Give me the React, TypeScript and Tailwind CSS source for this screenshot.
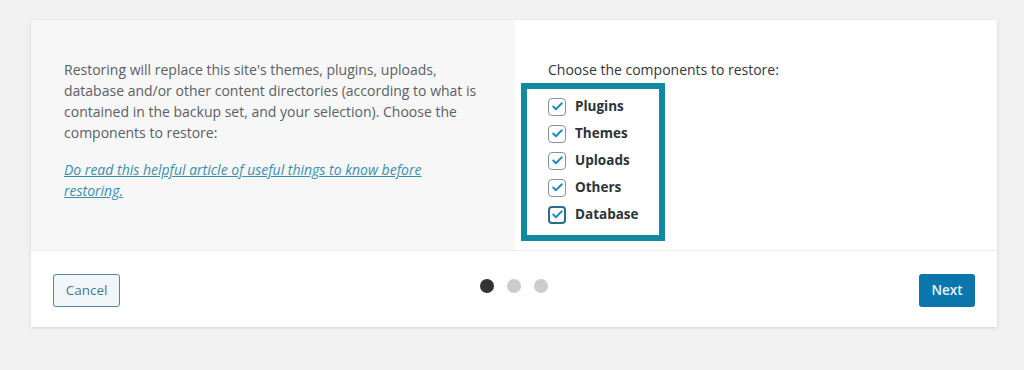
import { Check } from 'lucide-react'

const components = ['Plugins', 'Themes', 'Uploads', 'Others', 'Database']

export default function App() {
  return (
    <div className="h-[370px] overflow-hidden bg-[#f1f1f1] px-[31px] pt-[20px] font-['Open_Sans',sans-serif]">
      <div className="w-[966px] bg-white shadow-[0_1px_3px_rgba(0,0,0,0.13)]">
        <div className="flex h-[230px]">
          <div className="w-[484px] bg-[#f7f7f7] pl-[33px] pr-[20px] pt-[39px]">
            <p className="text-[14px] leading-[21px] text-[#5a6066]">
              Restoring will replace this site's themes, plugins, uploads,
              <br />
              database and/or other content directories (according to what is
              <br />
              contained in the backup set, and your selection). Choose the
              <br />
              components to restore:
            </p>
            <p className="mt-[16px] text-[14px] leading-[21px] text-[#3b8fae] italic underline">
              Do read this helpful article of useful things to know before
              <br />
              restoring.
            </p>
          </div>
          <div className="flex-1 pt-[39px]">
            <p className="pl-[33px] text-[14px] leading-[21px] text-[#32373c]">Choose the components to restore:</p>
            <div className="ml-[6px] mt-[3px] w-[144px] border-[6px] border-[#13899f] pb-[7px] pl-[21px] pt-[4px]">
              {components.map((name, index) => (
                <CheckRow key={name} label={name} focused={index === components.length - 1} />
              ))}
            </div>
          </div>
        </div>
        <div className="relative flex h-[77px] items-center justify-between border-t border-[#ececec] px-[22px] pt-[2px]">
          <button
            type="button"
            className="h-[33px] w-[67px] rounded-[3px] border border-[#4f8aa3] bg-[#f3f6f8] text-[13.5px] text-[#3f7a94]"
          >
            Cancel
          </button>
          <div className="absolute left-1/2 top-[28px] flex -translate-x-1/2 gap-[13px]">
            <span className="h-[14px] w-[14px] rounded-full bg-[#333333]" />
            <span className="h-[14px] w-[14px] rounded-full bg-[#cccccc]" />
            <span className="h-[14px] w-[14px] rounded-full bg-[#cccccc]" />
          </div>
          <button
            type="button"
            className="h-[33px] w-[56px] rounded-[3px] bg-[#0a76ab] text-[13.5px] font-semibold text-[#e8f4fa]"
          >
            Next
          </button>
        </div>
      </div>
    </div>
  )
}

interface CheckRowProps {
  label: string
  focused: boolean
}

function CheckRow({ label, focused }: CheckRowProps) {
  return (
    <div className="flex h-[27px] items-center gap-[9px]">
      <span
        className={`flex h-[18px] w-[18px] items-center justify-center rounded-[4px] bg-white ${focused ? 'border-2 border-[#2b6d88]' : 'border border-[#8a9196]'}`}
      >
        <Check className="h-[13px] w-[13px] text-[#1e8cbe]" strokeWidth={3.5} />
      </span>
      <span className="text-[13.5px] font-bold text-[#2c3338]">{label}</span>
    </div>
  )
}
